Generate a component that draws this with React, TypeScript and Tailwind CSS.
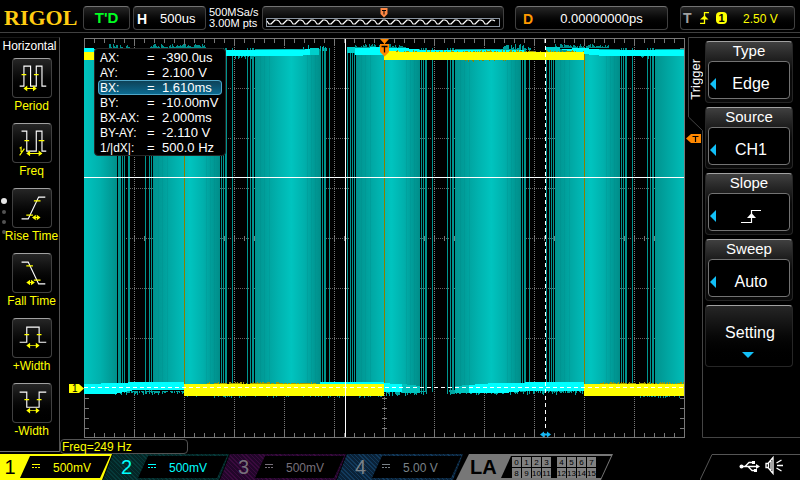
import type { ReactNode } from "react";

type Span = [number, number];

const solidBands: Span[] = [[84, 117], [153, 220], [255, 321], [356, 420], [455, 521], [555, 620], [655, 684]];

const thinBars: Span[] = [
  [118, 3], [122, 1], [124, 1], [128, 2], [145, 1], [149, 1], [151, 1],
  [221, 1], [223, 1], [225, 2], [232, 1], [247, 1], [250, 1], [252, 2],
  [322, 1], [324, 2], [329, 1], [347, 1], [350, 1], [352, 1], [354, 1],
  [421, 1], [423, 1], [425, 2], [432, 1], [447, 1], [450, 1], [452, 2],
  [522, 1], [524, 2], [529, 1], [546, 1], [549, 1], [551, 1], [553, 1],
  [621, 1], [623, 1], [625, 2], [632, 1], [647, 1], [650, 1], [652, 2],
];

const noise = (n: number) => {
  const v = Math.sin(n * 12.9898) * 43758.5453;
  return v - Math.floor(v);
};

/* Ragged edge made of one-pixel columns growing up or down from a base line. */
function Fringe({ from, to, y, size, color, up = false, density = 0.7 }: {
  from: number; to: number; y: number; size: number; color: string; up?: boolean; density?: number;
}) {
  let d = "";
  for (let x = from; x < to; x++) {
    if (noise(x + y) > density) continue;
    const h = Math.max(1, Math.round(noise(x * 3 + y) * size));
    d += `M${x} ${up ? y - h : y}h1v${h}h-1z`;
  }
  return <path d={d} fill={color} />;
}

function Graticule() {
  const cols = Array.from({ length: 11 }, (_, i) => 134 + i * 50);
  const rows = Array.from({ length: 7 }, (_, i) => 88 + i * 50);
  const xt = Array.from({ length: 59 }, (_, i) => 94 + i * 10);
  const yt = Array.from({ length: 39 }, (_, i) => 48 + i * 10);
  return (
    <g stroke="#777" fill="none">
      {cols.map((x) => <path key={x} d={`M${x + 0.5} 39V437`} strokeDasharray="1 1" />)}
      {rows.map((y) => <path key={y} d={`M84 ${y + 0.5}H684`} stroke={y === 388 ? "none" : "#666"} strokeDasharray="1 1" />)}
      {xt.map((x) => <path key={x} d={`M${x + 0.5} 39v${(x - 84) % 50 ? 4 : 7}M${x + 0.5} 437v${(x - 84) % 50 ? -4 : -7}M${x + 0.5} 236v5`} />)}
      {yt.map((y) => <path key={y} d={`M85 ${y + 0.5}h4M684 ${y + 0.5}h-4M382 ${y + 0.5}h5`} />)}
      <rect x="84.5" y="38.5" width="600" height="399" />
    </g>
  );
}

function Scope() {
  return (
    <svg viewBox="60 33 626 405" className="block w-full" shapeRendering="crispEdges" role="img" aria-label="Waveform display">
      <defs>
        <linearGradient id="band">
          <stop offset="0" stopColor="#00938f" />
          <stop offset="0.12" stopColor="#009c98" />
          <stop offset="0.35" stopColor="#00b2ae" />
          <stop offset="0.55" stopColor="#00c4bf" />
          <stop offset="0.75" stopColor="#00b0ac" />
          <stop offset="0.9" stopColor="#009a96" />
          <stop offset="1" stopColor="#008d89" />
        </linearGradient>
        <linearGradient id="bandFall">
          <stop offset="0" stopColor="#00c4bf" />
          <stop offset="0.5" stopColor="#00b0ac" />
          <stop offset="1" stopColor="#00908c" />
        </linearGradient>
        <linearGradient id="bandRise">
          <stop offset="0" stopColor="#00938f" />
          <stop offset="1" stopColor="#00bdb8" />
        </linearGradient>
      </defs>
      <Graticule />
      {solidBands.map(([a, b], i) => (
        <rect key={a} x={a} y="49" width={b - a} height="340" fill={i === 0 ? "url(#bandFall)" : i === 6 ? "url(#bandRise)" : "url(#band)"} />
      ))}
      {solidBands.slice(1, 6).map(([a, b]) => (
        <path key={a} stroke="#008480" strokeOpacity="0.2" d={`M${a + 5.5} 50V388M${a + 9.5} 50V388M${a + 14.5} 50V388M${b - 5.5} 50V388M${b - 9.5} 50V388M${b - 13.5} 50V388`} />
      ))}
      {thinBars.map(([x, w]) => <rect key={x} x={x} y="48" width={w} height="344" fill="#00948f" />)}
      <path d="M184.5 60V384M384.5 60V384M584.5 52V384" stroke="#8a7f00" />

      <Fringe from={107} to={130} y={48} size={4} color="#008f8b" up />
      <Fringe from={150} to={208} y={48} size={4} color="#008f8b" up density={0.95} />
      <Fringe from={303} to={328} y={51} size={6} color="#00b0ac" up />
      <Fringe from={355} to={406} y={48} size={4} color="#008f8b" up density={0.95} />
      <Fringe from={500} to={531} y={50} size={6} color="#00a09c" up />
      <Fringe from={555} to={609} y={48} size={4} color="#008f8b" up density={0.95} />
      <path fill="#00ffff" d="M84 48h10v5H84zM226 50h74l10-1v6l-14 1h-70zM355 48l29-1v8h-29zM384 48h20l20 2h100v2H384zM560 49l24-1 20 2h80v6h-80l-20-2z" />
      <path fill="#00cfca" d="M310 48h9v7h-9zM347 47h8v6h-8zM546 47h14v5h-14z" />
      <Fringe from={235} to={256} y={56} size={3} color="#009c98" />
      <Fringe from={640} to={662} y={56} size={4} color="#009c98" />

      <path fill="#ffff00" d="M84 52h10v8H84zM384 51h10l10 1h180v8H384z" />
      <Fringe from={394} to={584} y={52} size={2} color="#a09a00" up density={0.45} />
      <Fringe from={462} to={506} y={60} size={2} color="#8a8400" density={0.3} />

      <Fringe from={84} to={184} y={391} size={4} color="#00a5a1" density={0.85} />
      <Fringe from={384} to={427} y={391} size={5} color="#00a5a1" density={0.9} />
      <Fringe from={446} to={584} y={390} size={5} color="#00a5a1" density={0.8} />
      <path fill="#00ffff" d="M84 384l34-1 20-1h46v8h-50l-20 4H84zM384 383l36 3v6h-36zM455 386l40-3h30v-1h59v9h-60l-20 2h-40z" />
      <path fill="#00c4bf" d="M402 384l18 2v7l-18 0zM455 386l14-1v8h-14z" />
      <rect x="320" y="382" width="64" height="2" fill="#00ffff" />
      <Fringe from={184} to={384} y={396} size={2} color="#008f8b" density={0.25} />
      <Fringe from={205} to={316} y={384} size={2} color="#a09a00" up density={0.8} />
      <Fringe from={600} to={684} y={384} size={2} color="#a09a00" up density={0.7} />
      <Fringe from={640} to={684} y={396} size={2} color="#008f8b" density={0.5} />
      <path fill="#ffff00" d="M184 384h200v12H184zM584 384h100v12H584z" />

      <path d="M84 387.5H684" stroke="#fff" strokeDasharray="4 3" />
      <path d="M84 177.5H684M345.5 39V437" stroke="#fff" />
      <path d="M545.5 39V430" stroke="#fff" strokeDasharray="4 3" />
      <path d="M540 434.5l4-3v2h3v-2l4 3-4 3v-2h-3v2z" fill="#12b7f5" shapeRendering="auto" />

      <g shapeRendering="auto">
        <path d="M380 39h9l-4.500 5zM380 44h9v8l-4.500 4.500L380 52z" fill="#ff8800" />
        <path d="M381.500 46.500h6M384.500 46.500v6" stroke="#000" strokeWidth="1.300" />
        <path d="M69 384h10l5 4.500-5 4.500H69z" fill="#ffff00" />
        <text x="72" y="392" fontSize="10" fill="#000" fontFamily="Liberation Sans, sans-serif">1</text>
      </g>
    </svg>
  );
}

const cursorRows = [
  ["AX:", "-390.0us"], ["AY:", "2.100 V"], ["BX:", "1.610ms"], ["BY:", "-10.00mV"],
  ["BX-AX:", "2.000ms"], ["BY-AY:", "-2.110 V"], ["1/|dX|:", "500.0 Hz"],
];

function CursorTable() {
  return (
    <div className="absolute left-[34px] top-[15px] w-[132px] rounded-sm border border-neutral-800 bg-black px-[3px] pt-px">
      <table className="w-full table-fixed border-separate border-spacing-0 text-[13px] leading-[13px]">
        <tbody>
          {cursorRows.map(([name, value]) => {
            const on = name === "BX:";
            const edge = on ? "border-[#4fa6c8] bg-linear-to-b from-[#0d4258] to-[#0b6a90]" : "border-transparent";
            return (
              <tr key={name} className="h-[15px]">
                <th scope="row" className={`w-[49px] rounded-l-sm border-y border-l p-0 pt-px pl-px text-left text-xs leading-3 font-normal whitespace-nowrap ${edge}`}>{name}</th>
                <td className={`w-[15px] border-y p-0 pt-px leading-3 ${edge}`}>=</td>
                <td className={`rounded-r-sm border-y border-r p-0 pt-px leading-3 whitespace-nowrap ${edge}`}>{value}</td>
              </tr>
            );
          })}
        </tbody>
      </table>
    </div>
  );
}

/* Yellow double-headed arrow */
const arrow = (a: number, b: number, y: number) =>
  `M${a} ${y}l4-3v2.500H${b - 4}v-2.500l4 3-4 3v-2.500H${a + 4}v2.500z`;

const measures = [
  { label: "Period", line: "M7 28.500H11.500V7.500H18.500V28.500H24.500V7.500H30.500V28.500H35", ticks: "M9 16.500h5M22 16.500h5", head: arrow(11, 25, 31) },
  { label: "Freq", line: "M9 7.500H14.500V28.500H24.500V7.500H30.500V28.500H35", ticks: "M12 17.500h5M27 17.500h6M7 25.500l1.500-1v5M7 33l5-7", head: arrow(14, 31, 31) },
  { label: "Rise Time", line: "M9 31.500H16L27 8.500H34", ticks: "M14 27.500h7M22 12.500h7", head: arrow(20, 29, 30) },
  { label: "Fall Time", line: "M9 8.500H16L27 31.500H34", ticks: "M14 12.500h7M22 27.500h7", head: arrow(14, 23, 30) },
  { label: "+Width", line: "M7 24.500H14.500V8.500H27.500V24.500H35", ticks: "M12 16.500h5M25 16.500h5", head: arrow(14, 28, 28) },
  { label: "-Width", line: "M7 8.500H14.500V24.500H27.500V8.500H35", ticks: "M12 16.500h5M25 16.500h5", head: arrow(14, 28, 28) },
];

function MeasureMenu() {
  return (
    <nav aria-label="Horizontal" className="relative mt-1 mb-0.5 flex w-[60px] shrink-0 flex-col items-center gap-[10px] border-t border-r border-b border-t-neutral-900 border-r-neutral-600 border-b-neutral-500">
      <h2 className="-mb-[7px] h-[17px] text-xs leading-[17px]">Horizontal</h2>
      {measures.map((m) => (
        <button key={m.label} type="button" className="flex h-[55px] flex-col items-center pl-1 text-xs leading-[17px] whitespace-nowrap text-[#ffff00]">
          <svg viewBox="0 0 40 40" className="block size-10 shrink-0 rounded border border-neutral-700 border-t-neutral-400 bg-linear-to-b from-neutral-800 to-black" fill="none">
            <path d={m.line} stroke="#fff" strokeWidth="1.200" />
            <path d={m.ticks} stroke="#ff0" strokeWidth="1.200" />
            <path d={m.head} fill="#ff0" />
          </svg>
          {m.label}
        </button>
      ))}
      <div className="absolute top-[160px] left-px flex flex-col items-center gap-[6px]" aria-hidden="true">
        <i className="size-[6px] rounded-full bg-neutral-200" />
        <i className="size-1 rounded-full bg-neutral-600" />
        <i className="size-1 rounded-full bg-neutral-600" />
        <i className="size-1 rounded-full bg-neutral-600" />
      </div>
    </nav>
  );
}

function MenuCard({ title, children }: { title: string; children: ReactNode }) {
  return (
    <button type="button" className="flex h-[62px] w-full flex-col rounded border border-neutral-800 border-t-neutral-400 bg-linear-to-b from-neutral-700 to-neutral-950 to-50% px-0.5 text-center">
      <span className="h-[19px] w-full text-[15px] leading-[18px]">{title}</span>
      <span className="relative flex h-[38px] w-full items-center justify-center rounded border border-neutral-500 bg-black pt-2 pl-1 text-base leading-[18px]">
        <span className="absolute top-[16px] left-px border-y-[6px] border-r-[6px] border-y-transparent border-r-[#12c0f8]" />
        {children}
      </span>
    </button>
  );
}

function TriggerMenu() {
  return (
    <aside className="relative flex w-[114px] shrink-0 pt-1">
      <svg viewBox="0 0 114 401" className="pointer-events-none absolute top-1 left-0 w-full" fill="none" stroke="#444" aria-hidden="true">
        <path d="M114 .5H2.500V80L16.500 93.500V400.500H114" />
      </svg>
      <div className="flex w-4 shrink-0 flex-col">
        <h2 className="flex h-[92px] items-center justify-center pb-2 text-[13px] leading-4">
          <span className="ml-[3px] rotate-180 [writing-mode:vertical-rl]">Trigger</span>
        </h2>
        <svg viewBox="0 0 16 13" className="mt-1 h-[13px] w-4" role="img" aria-label="Trigger level">
          <path d="M0 5.500L5 1h10v9H5z" fill="#ff8800" />
          <path d="M6.500 3.500h6M9.500 3.500v5.500" stroke="#000" strokeWidth="1.200" />
        </svg>
      </div>
      <div className="flex flex-1 flex-col gap-1 pt-1 pr-[7px] pl-[3px]">
        <MenuCard title="Type">Edge</MenuCard>
        <MenuCard title="Source">CH1</MenuCard>
        <MenuCard title="Slope">
          <svg viewBox="0 0 20 14" className="h-3.5 w-5" aria-label="Rising">
            <path d="M0 13.500H10.500V1.500H20" stroke="#fff" strokeWidth="1.200" fill="none" />
            <path d="M6 9l4.500-5L15 9z" fill="#fff" />
          </svg>
        </MenuCard>
        <MenuCard title="Sweep">Auto</MenuCard>
        <button type="button" className="flex h-[62px] w-full flex-col items-center gap-[10px] rounded border border-neutral-800 border-t-neutral-400 bg-linear-to-b from-neutral-800 to-black pt-[18px] pl-0.5 text-base leading-[18px]">
          Setting
          <span className="mr-1 border-x-[6px] border-t-[6px] border-x-transparent border-t-[#12c0f8]" />
        </button>
      </div>
    </aside>
  );
}

const box = "flex h-6 items-center rounded border border-neutral-700 border-t-neutral-500 bg-linear-to-b from-neutral-800 to-black";

function Header() {
  return (
    <header className="flex h-[33px] items-start border-b border-neutral-700 pt-[6px] pr-[5px]">
      <h1 className="w-[83px] shrink-0 pl-1 font-['Liberation_Serif',serif] text-[22px] leading-6 font-bold text-[#ffcc11]">RIGOL</h1>
      <button type="button" className={`${box} w-[47px] shrink-0 justify-center text-[15px] font-bold text-[#00ff22]`}>T'D</button>
      <button type="button" className={`${box} ml-[3px] w-[73px] shrink-0 pt-0.5 text-[13px]`}>
        <b className="w-[26px] pl-[3px] text-left text-sm leading-4">H</b>500us
      </button>
      <p className="w-[56px] shrink-0 pt-px pl-[3px] text-[11px] leading-[11px] whitespace-nowrap">500MSa/s<br />3.00M pts</p>
      <button type="button" aria-label="Memory depth" className={`${box} min-w-0 flex-1`}>
        <svg viewBox="0 0 240 22" className="block w-full" fill="none">
          <rect x="3.500" y="11.500" width="233" height="8" stroke="#8a94a0" fill="#000" />
          <path d={"M4 14" + Array.from({ length: 19 }, () => "l2 3h2l4-4h2l2 1").join("")} stroke="#fff" strokeWidth="1.200" strokeLinejoin="round" />
          <path d="M117.500 1h7v6l-3.500 3.500L117.500 7z" fill="#ff8844" />
          <path d="M119 3.500h4M121 3.500v4" stroke="#000" />
        </svg>
      </button>
      <button type="button" className={`${box} ml-[11px] w-[153px] shrink-0 pt-0.5 text-[13px]`}>
        <b className="w-5 pl-[7px] text-left text-sm leading-4 text-[#ff9900]">D</b>
        <span className="flex-1 text-center">0.00000000ps</span>
      </button>
      <button type="button" className={`${box} ml-3 w-[115px] shrink-0 text-xs text-[#ffff00]`}>
        <b className="w-[19px] pl-0.5 text-left text-sm text-neutral-400">T</b>
        <svg viewBox="0 0 9 12" className="h-3 w-[9px]" fill="none" aria-label="Rising edge">
          <path d="M0 11.500H4.500V.5H9" stroke="#ff0" strokeWidth="1.300" />
          <path d="M0 7.500l4.500-4 4 4z" fill="#ff0" />
        </svg>
        <span className="ml-[7px] h-3 w-[11px] rounded-sm bg-[#ffff00] text-center text-[11px] leading-3 font-bold text-black">1</span>
        <span className="ml-4 pt-0.5">2.50 V</span>
      </button>
    </header>
  );
}

const slant = "[clip-path:polygon(10px_0,100%_0,calc(100%-10px)_100%,0_100%)]";

const channels = [
  { n: "2", v: "500mV", tone: "bg-[repeating-linear-gradient(45deg,#063a3a_0_1px,#042626_1px_3px)] text-[#00ffff]" },
  { n: "3", v: "500mV", tone: "bg-[repeating-linear-gradient(45deg,#3a0a3e_0_1px,#22062a_1px_3px)] text-[#77707a]" },
  { n: "4", v: "5.00 V", tone: "bg-[repeating-linear-gradient(45deg,#123a5c_0_1px,#0a2238_1px_3px)] text-[#7a8288]" },
];

function Coupling() {
  return (
    <svg viewBox="0 0 8 5" className="mb-1 h-[5px] w-2" stroke="currentColor" aria-label="DC">
      <path d="M0 .5h8" />
      <path d="M0 3.500h8" strokeDasharray="2 1" />
    </svg>
  );
}

function Digits({ from }: { from: number }) {
  return (
    <span className="flex gap-px">
      {[0, 1, 2, 3].map((i) => (
        <span key={i} className="flex h-[10px] w-[9px] justify-center bg-[#808080] text-[8px] leading-[11px] text-black">{from + i}</span>
      ))}
    </span>
  );
}

function Footer() {
  return (
    <footer className="flex h-[26px]">
      <button type="button" className="flex w-28 items-stretch bg-[#ffff00] pr-0.5 [clip-path:polygon(0_0,100%_0,calc(100%-10px)_100%,0_100%)]">
        <span className="w-5 text-xl leading-[27px] text-black">1</span>
        <span className={`my-0.5 flex flex-1 items-center gap-[13px] bg-black pt-0.5 pl-3 text-xs text-[#ffff00] ${slant}`}><Coupling />500mV</span>
      </button>
      {channels.map((c) => (
        <button key={c.n} type="button" className={`-ml-[9px] flex w-[126px] items-stretch pr-0.5 ${slant} ${c.tone}`}>
          <span className="w-[35px] pl-3 text-xl leading-[27px]">{c.n}</span>
          <span className={`my-0.5 flex flex-1 items-center gap-[13px] bg-black pt-0.5 pl-[10px] text-xs ${slant}`}><Coupling />{c.v}</span>
        </button>
      ))}
      <button type="button" className="-ml-[7px] flex w-[157px] items-stretch bg-[#777] pr-0.5 [clip-path:polygon(13px_0,100%_0,calc(100%-12px)_100%,0_100%)]">
        <span className="w-[45px] pl-[14px] text-left text-xl leading-[27px] font-bold text-black">LA</span>
        <span className={`my-0.5 grid flex-1 grid-cols-[auto_auto] content-center justify-start gap-x-1.5 gap-y-px bg-black pl-[11px] ${slant}`}>
          <Digits from={0} /><Digits from={4} /><Digits from={8} /><Digits from={12} />
        </span>
      </button>
      <div className="ml-auto flex w-[100px]">
        <svg viewBox="0 0 100 26" className="h-[26px] w-full" fill="none">
          <path d="M0 26L12 .5H100" stroke="#555" />
          <g stroke="#fff" strokeWidth="1.300">
            <path d="M41 12.500H57M45 12.500l4-4h4M48 12.500l4 4h4" />
            <path d="M66 9.500h2l5-6v16l-5-6h-2zM68.500 9v5M71 7v9M76.500 9l5-3M77 11.500h6M76.500 14l5 3" />
          </g>
          <path d="M56 10l4 2.500-4 2.500zM52 7h3v3h-3zM54 15h3v3h-3z" fill="#fff" />
          <circle cx="41.500" cy="12.500" r="2" fill="#fff" />
        </svg>
      </div>
    </footer>
  );
}

export default function App() {
  return (
    <div className="flex min-h-screen flex-col bg-black font-['Liberation_Sans',Arial,sans-serif] text-white">
      <Header />
      <main className="flex flex-1">
        <MeasureMenu />
        <section className="relative min-w-0 flex-1">
          <Scope />
          <CursorTable />
          <output className="mt-px block h-[15px] w-32 rounded-sm border border-neutral-600 pl-px text-xs leading-[15px] text-[#ffff00]">Freq=249 Hz</output>
        </section>
        <TriggerMenu />
      </main>
      <Footer />
    </div>
  );
}
